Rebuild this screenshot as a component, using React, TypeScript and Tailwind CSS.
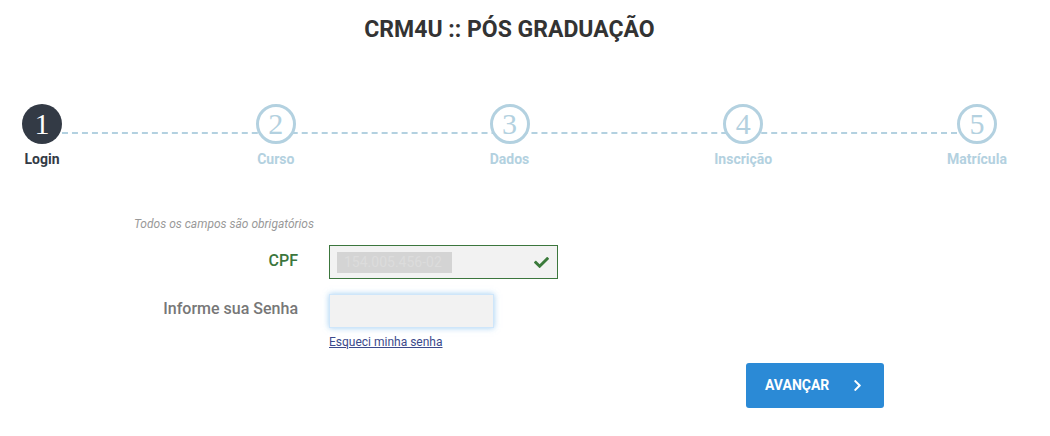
import React from "react";
import { FaCheck, FaChevronRight } from "react-icons/fa";

const steps = ["Login", "Curso", "Dados", "Inscrição", "Matrícula"];

export default function App() {
  return (
    <div className="w-[1050px] h-[436px] bg-white overflow-hidden" style={{ fontFamily: "Roboto, 'Liberation Sans', sans-serif" }}>
      <div className="w-[1019px]">
        <h1 className="pt-[15px] text-center text-[23px] leading-[30px] font-bold text-[#333]">CRM4U :: PÓS GRADUAÇÃO</h1>

        <div className="relative mt-[59px] h-[70px]">
          <div className="absolute left-[42px] right-[42px] top-[28px] border-t-2 border-dashed border-[#b3d1e0]" />
          <div className="relative flex justify-between">
            {steps.map((s, i) => (
              <div key={s} className="w-[84px] flex flex-col items-center">
                {i === 0 ? (
                  <div className="w-[40px] h-[40px] rounded-full bg-[#333a45] flex items-center justify-center text-white text-[30px] leading-none" style={{ fontFamily: "'Liberation Serif', serif" }}>
                    1
                  </div>
                ) : (
                  <div className="w-[40px] h-[40px] rounded-full bg-white border-[3px] border-[#b3d1e0] flex items-center justify-center text-[#b3d1e0] text-[30px] leading-none" style={{ fontFamily: "'Liberation Serif', serif" }}>
                    {i + 1}
                  </div>
                )}
                <div className={`mt-[7px] text-[14px] leading-[17px] font-bold whitespace-nowrap ${i === 0 ? "text-[#333a45]" : "text-[#b3d1e0]"}`}>{s}</div>
              </div>
            ))}
          </div>
        </div>

        <div className="mt-[43px] pl-[134px] text-[12px] leading-[14px] italic text-[#999]">Todos os campos são obrigatórios</div>

        <div className="mt-[14px] grid grid-cols-[298px_auto] gap-x-[31px] items-center">
          <div className="text-right text-[16px] font-medium text-[#3c763d] pb-[2px]">CPF</div>
          <div className="w-[229px] h-[34px] border border-[#3c763d] bg-[#f2f2f2] flex items-center pl-[7px] pr-[8px]">
            <span className="bg-[#d4d4d4] text-[#dcdcdc] text-[14px] leading-[21px] pl-[7px] w-[115px] whitespace-nowrap overflow-hidden">154.005.456-02</span>
            <FaCheck className="ml-auto text-[#3a7a3a]" size={15} />
          </div>
        </div>

        <div className="mt-[15px] grid grid-cols-[298px_auto] gap-x-[31px]">
          <div className="text-right text-[16px] font-medium text-[#777] leading-[30px]">Informe sua Senha</div>
          <div>
            <div className="w-[165px] h-[34px] bg-[#f2f2f2] border border-[#cfe6fa] shadow-[0_0_6px_rgba(102,175,233,0.6)]" />
            <a href="#" className="block mt-[7px] text-[12px] leading-[14px] text-[#3b4a8c] underline">Esqueci minha senha</a>
          </div>
        </div>

        <div className="mt-[14px] pl-[746px]">
          <button className="w-[138px] h-[45px] rounded-[3px] bg-[#2b8ad6] text-white text-[14px] font-bold flex items-center pl-[19px] pr-[20px]">
            AVANÇAR
            <FaChevronRight className="ml-auto" size={13} />
          </button>
        </div>
      </div>
    </div>
  );
}
